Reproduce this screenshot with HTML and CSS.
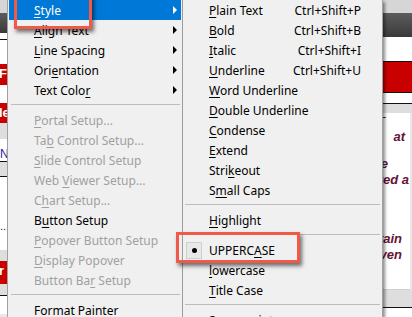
FILE: index.html
```html
<!DOCTYPE html>
<html lang="en">
<head>
  <meta charset="UTF-8" />
  <title>Format menu - Style</title>
  <link rel="stylesheet" href="styles.css">
</head>
<body>

<div class="screen">

  <div class="app-left">
    <div class="bg-light h13"></div>
    <div class="bg-dark h20"></div>
    <div class="bg-white h7 rule-bottom"></div>
    <div class="bg-white h24"></div>
    <div class="bg-red h21">Fi</div>
    <div class="bg-white h18"></div>
    <div class="bg-red h20">le</div>
    <div class="bg-gray h16"></div>
    <div class="bg-white h8"></div>
    <div class="bg-white h15 blue-n rule-bottom">N</div>
    <div class="bg-gray h15 rule-bottom"></div>
    <div class="bg-white h46"></div>
    <div class="bg-white h27 dots">...</div>
    <div class="bg-gray h11"></div>
    <div class="bg-red h23">r</div>
    <div class="bg-gray h12 rule-bottom"></div>
    <div class="bg-white h18"></div>
  </div>

  <div class="menu">
    <div class="item active"><span><u>S</u>tyle</span><i class="arrow"></i></div>
    <div class="item"><span><u>A</u>lign Text</span><i class="arrow"></i></div>
    <div class="item"><span><u>L</u>ine Spacing</span><i class="arrow"></i></div>
    <div class="item"><span>Ori<u>e</u>ntation</span><i class="arrow"></i></div>
    <div class="item"><span>Text Colo<u>r</u></span><i class="arrow"></i></div>
    <div class="sep"></div>
    <div class="item off"><span><u>P</u>ortal Setup...</span></div>
    <div class="item off"><span>Ta<u>b</u> Control Setup...</span></div>
    <div class="item off"><span><u>S</u>lide Control Setup</span></div>
    <div class="item off"><span>Web <u>V</u>iewer Setup...</span></div>
    <div class="item off"><span>C<u>h</u>art Setup...</span></div>
    <div class="item"><span>B<u>u</u>tton Setup</span></div>
    <div class="item off"><span><u>P</u>opover Button Setup</span></div>
    <div class="item off"><span><u>D</u>isplay Popover</span></div>
    <div class="item off"><span>Button Ba<u>r</u> Setup</span></div>
    <div class="sep"></div>
    <div class="item"><span>F<u>o</u>rmat Painter</span></div>
  </div>

  <div class="submenu">
    <div class="item"><span class="gutter"></span><span><u>P</u>lain Text</span><span class="key">Ctrl+Shift+P</span></div>
    <div class="item"><span class="gutter"></span><span><u>B</u>old</span><span class="key">Ctrl+Shift+B</span></div>
    <div class="item"><span class="gutter"></span><span><u>I</u>talic</span><span class="key">Ctrl+Shift+I</span></div>
    <div class="item"><span class="gutter"></span><span><u>U</u>nderline</span><span class="key">Ctrl+Shift+U</span></div>
    <div class="item"><span class="gutter"></span><span><u>W</u>ord Underline</span></div>
    <div class="item"><span class="gutter"></span><span><u>D</u>ouble Underline</span></div>
    <div class="item"><span class="gutter"></span><span><u>C</u>ondense</span></div>
    <div class="item"><span class="gutter"></span><span><u>E</u>xtend</span></div>
    <div class="item"><span class="gutter"></span><span>Stri<u>k</u>eout</span></div>
    <div class="item"><span class="gutter"></span><span>S<u>m</u>all Caps</span></div>
    <div class="sep"></div>
    <div class="item"><span class="gutter"></span><span><u>H</u>ighlight</span></div>
    <div class="sep"></div>
    <div class="item"><span class="gutter"><span class="check"><span class="dot"></span></span></span><span>UPPERC<u>A</u>SE</span></div>
    <div class="item"><span class="gutter"></span><span><u>l</u>owercase</span></div>
    <div class="item"><span class="gutter"></span><span><u>T</u>itle Case</span></div>
    <div class="sep"></div>
    <div class="item"><span class="gutter"></span><span>Su<u>p</u>erscript</span></div>
  </div>

  <div class="app-right">
    <div class="bg-light h13"></div>
    <div class="bg-dark h24"></div>
    <div class="bg-white h25 rule-bottom"></div>
    <div class="bg-red h31 rule-bottom"></div>
    <div class="bg-white h11 rule-bottom"></div>
    <div class="bg-gray h9"></div>
    <div class="panel">
      <div class="line l1"><span>-</span></div>
      <div class="line l2"><span>at</span></div>
      <div class="line l3"><span>be</span></div>
      <div class="line l4"><span>treated a</span></div>
      <div class="line l5"><span>contain</span></div>
      <div class="line l6"><span>given</span></div>
    </div>
    <div class="bg-gray h18 rule-bottom"></div>
    <div class="bg-white h18"></div>
  </div>

  <div class="callout callout-style"></div>
  <div class="callout callout-upper"></div>

</div>

</body>
</html>
```

FILE: styles.css
```css
body { margin: 0; background: #e8e8e8; font-family: "Noto Sans", "Open Sans", sans-serif; font-size: 12px; }
.screen { position: relative; display: flex; width: 412px; height: 317px; overflow: hidden; }

/* app behind the menus */
.app-left { width: 7px; flex: none; overflow: hidden; }
.app-right { flex: 1; overflow: hidden; }
.app-left div, .app-right > div { box-sizing: border-box; white-space: nowrap; overflow: hidden; }
.bg-light { background: #d6d6d6; }
.bg-dark { background: linear-gradient(#5c5c5c, #3a3a3a); }
.bg-white { background: #fff; }
.bg-red { background: #c90000; color: #fff; font: bold 13px "Liberation Sans", sans-serif; line-height: 20px; margin-left: -1px; }
.bg-gray { background: #dedede; }
.rule-bottom { border-bottom: 1px solid #111; }
.blue-n { color: #1d1da8; font: 12px "Liberation Sans", sans-serif; line-height: 14px; }
.dots { font: 11px "Liberation Sans", sans-serif; line-height: 6px; color: #222; }
.h7 { height: 7px; } .h8 { height: 8px; } .h9 { height: 9px; } .h11 { height: 11px; }
.h12 { height: 12px; } .h13 { height: 13px; } .h15 { height: 15px; } .h16 { height: 16px; }
.h18 { height: 18px; } .h20 { height: 20px; } .h21 { height: 21px; } .h23 { height: 23px; }
.h24 { height: 24px; } .h25 { height: 25px; } .h27 { height: 27px; } .h31 { height: 31px; }
.h46 { height: 46px; }

.panel { height: 177px; margin-right: 2px; background: #fff; border-bottom: 1px solid #d0d0d0; color: #641238; font: italic bold 13px "Liberation Sans", sans-serif; }
.line { display: flex; justify-content: flex-end; white-space: nowrap; overflow: hidden; height: 16px; line-height: 16px; }
.l1 { font-weight: normal; padding-right: 24px; height: 12px; line-height: 8px; }
.l2 { margin-top: 4px; padding-right: 5px; }
.l3 { margin-top: 11px; padding-right: 22px; }
.l4 { padding-right: 1px; }
.l5 { margin-top: 43px; padding-right: 8px; }
.l6 { padding-right: 8px; }

/* menus */
.menu, .submenu { flex: none; box-sizing: border-box; background: #f0f0f0; color: #000; }
.menu { width: 176px; border-left: 1px solid #a0a0a0; border-right: 1px solid #a0a0a0; padding: 0 1px; }
.submenu { position: relative; z-index: 1; width: 200px; border-right: 1px solid #a0a0a0; box-shadow: 2px 2px 3px rgba(0, 0, 0, 0.45); }
.item { display: flex; align-items: center; height: 20px; white-space: nowrap; }
.menu .item { padding-left: 25px; }
.item u { text-decoration-thickness: 1px; text-underline-offset: 2px; }
.item.active { background: #0078d7; color: #fff; }
.item.off { color: #a0a0a0; }
.arrow { margin-left: auto; margin-right: 4px; width: 0; height: 0; border-left: 4px solid #000; border-top: 4px solid transparent; border-bottom: 4px solid transparent; }
.item.active .arrow { border-left-color: #fff; }
.sep { height: 10px; position: relative; }
.sep::after { content: ""; position: absolute; left: 2px; right: 1px; top: 4px; border-top: 1px solid #bdbdbd; }
.submenu .sep::after { left: 2px; right: 2px; }

.gutter { width: 26px; flex: none; display: flex; }
.check { margin-left: 3px; width: 16px; height: 17px; box-sizing: border-box; border: 1px solid #cfcfcf; background: #e8e8e8; display: flex; align-items: center; justify-content: center; }
.dot { width: 5px; height: 5px; border-radius: 50%; background: #000; }
.key { margin-left: auto; padding-right: 21px; }

/* annotation boxes */
.callout { position: absolute; z-index: 2; border: 3px solid #f05a48; box-shadow: 2px 3px 4px rgba(0, 0, 0, 0.55); }
.callout-style { left: 14px; top: -10px; width: 72px; height: 33px; }
.callout-upper { left: 176px; top: 232px; width: 118px; height: 25px; }
```
